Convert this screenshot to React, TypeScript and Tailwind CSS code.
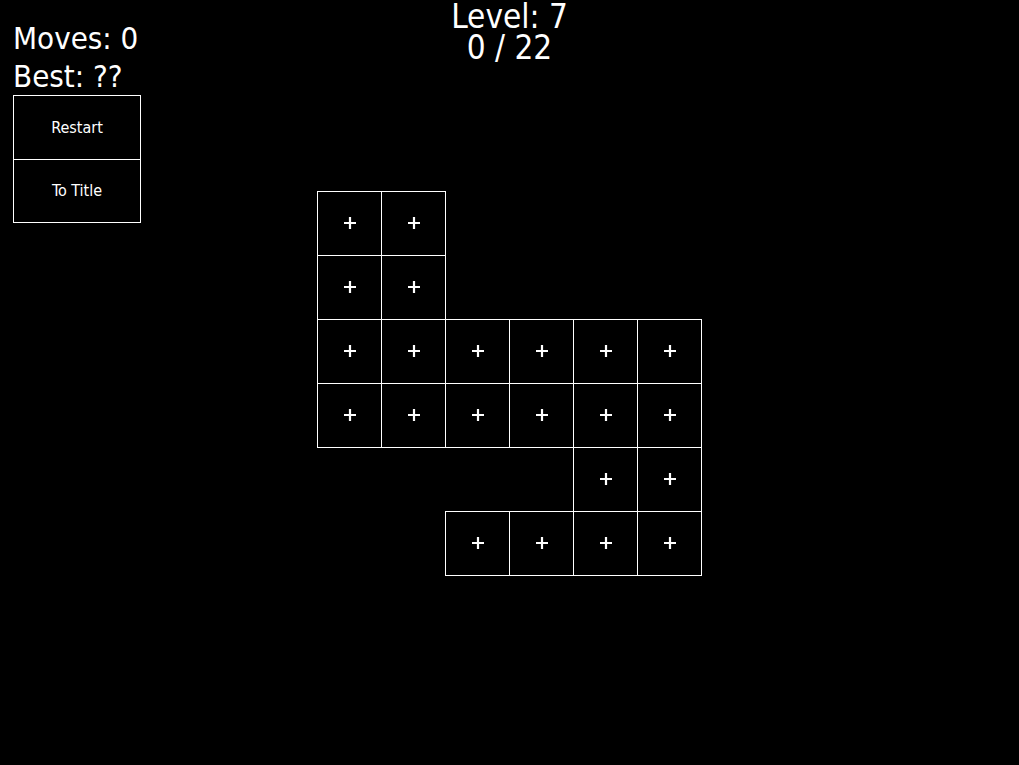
import React from "react";

const cells: [number, number][] = [
  [0, 0], [0, 1],
  [1, 0], [1, 1],
  [2, 0], [2, 1], [2, 2], [2, 3], [2, 4], [2, 5],
  [3, 0], [3, 1], [3, 2], [3, 3], [3, 4], [3, 5],
  [4, 4], [4, 5],
  [5, 2], [5, 3], [5, 4], [5, 5],
];

function Plus() {
  return (
    <svg width="14" height="14" viewBox="0 0 14 14">
      <path d="M7 1 V13 M1 7 H13" stroke="white" strokeWidth="2.2" />
    </svg>
  );
}

export default function App() {
  const font = { fontFamily: '"DejaVu Sans Condensed", "DejaVu Sans", sans-serif' };
  return (
    <div className="relative h-[765px] w-full bg-black text-white overflow-hidden" style={font}>
      <div className="absolute left-[13px] top-[19px] flex flex-col">
        <div className="text-[31px] leading-[38px]">Moves: 0</div>
        <div className="text-[31px] leading-[38px]">Best: ??</div>
        <div className="flex w-[128px] flex-col">
          <button className="flex h-[65px] w-[128px] items-center justify-center border border-white bg-black text-[16px] text-white">
            Restart
          </button>
          <button className="-mt-px flex h-[64px] w-[128px] items-center justify-center border border-white bg-black text-[16px] text-white">
            To Title
          </button>
        </div>
      </div>
      <div className="absolute left-0 right-0 top-[1px] flex flex-col items-center">
        <div className="text-[33px] leading-[31px]">Level: 7</div>
        <div className="text-[33px] leading-[31px]">0 / 22</div>
      </div>
      <div className="flex h-full w-full items-center justify-center">
        <div className="mt-[1px] grid h-[385px] w-[385px] grid-cols-[repeat(6,64px)] grid-rows-[repeat(6,64px)]">
          {cells.map(([r, c]) => (
            <div
              key={`${r}-${c}`}
              className="flex h-[65px] w-[65px] items-center justify-center border border-white"
              style={{ gridRow: r + 1, gridColumn: c + 1 }}
            >
              <Plus />
            </div>
          ))}
        </div>
      </div>
    </div>
  );
}
